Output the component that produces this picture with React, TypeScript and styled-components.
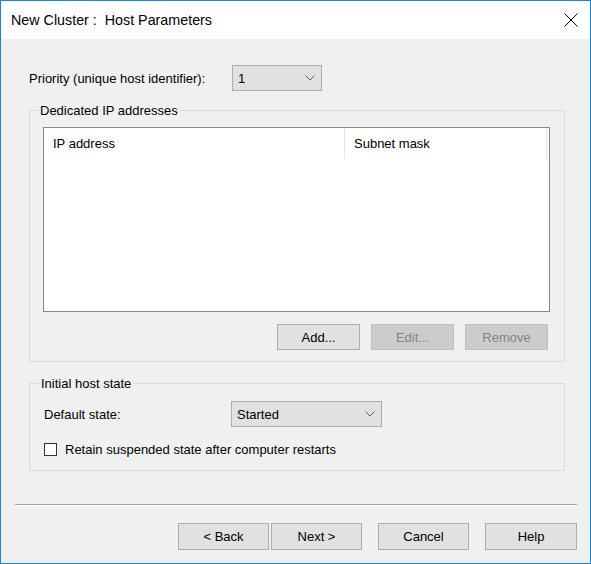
import React from "react";
import styled, { createGlobalStyle } from "styled-components";

const Global = createGlobalStyle`
  html, body { margin: 0; padding: 0; background: #ffffff; }
  * { box-sizing: border-box; }
  body { font-family: "Liberation Sans", Arial, sans-serif; font-size: 13px; color: #000; }
`;

const Window = styled.div`
  width: 591px;
  height: 564px;
  border: 1px solid #1883d7;
  display: flex;
  flex-direction: column;
  background: #f0f0f0;
`;

const TitleBar = styled.div`
  height: 38px;
  flex: none;
  background: #ffffff;
  display: flex;
  align-items: center;
  justify-content: space-between;
  padding: 0 12px 0 10px;
`;

const Title = styled.div`
  font-size: 14.3px;
  white-space: pre;
  color: #000;
`;

const CloseBtn = styled.div`
  width: 14px;
  height: 14px;
  display: flex;
`;

const Body = styled.div`
  flex: 1;
  display: flex;
  flex-direction: column;
  padding: 26px 13px 13px 14px;
`;

const FieldRow = styled.div<{ $labelWidth: number; $indent?: number }>`
  display: flex;
  align-items: center;
  height: 26px;
  padding-left: ${(p) => p.$indent ?? 0}px;
  & > span:first-child {
    width: ${(p) => p.$labelWidth}px;
    flex: none;
  }
`;

const Combo = styled.div<{ $width: number }>`
  width: ${(p) => p.$width}px;
  height: 26px;
  background: #e1e1e1;
  border: 1px solid #adadad;
  display: flex;
  align-items: center;
  justify-content: space-between;
  padding: 0 6px 0 5px;
`;

const GroupBox = styled.fieldset<{ $top: number; $pad: string }>`
  margin: ${(p) => p.$top}px 12px 0 14px;
  border: 1px solid #dcdcdc;
  padding: ${(p) => p.$pad};
  min-width: 0;
`;

const Legend = styled.legend`
  padding: 0 2px;
  margin-left: -5px;
  line-height: 17px;
  font-size: 13px;
`;

const ListView = styled.div`
  height: 185px;
  background: #ffffff;
  border: 1px solid #828790;
`;

const HeaderRow = styled.div`
  display: flex;
  height: 31px;
`;

const HeaderCell = styled.div<{ $width: number }>`
  width: ${(p) => p.$width}px;
  flex: none;
  border-right: 1px solid #e5e5e5;
  display: flex;
  align-items: center;
  padding-left: 9px;
`;

const ButtonRow = styled.div<{ $gap: number; $top: number; $right: number }>`
  display: flex;
  justify-content: flex-end;
  gap: ${(p) => p.$gap}px;
  margin-top: ${(p) => p.$top}px;
  padding-right: ${(p) => p.$right}px;
`;

const Button = styled.button<{ $width: number; $height: number }>`
  width: ${(p) => p.$width}px;
  height: ${(p) => p.$height}px;
  margin: 0;
  padding: 0;
  font-family: inherit;
  font-size: 13px;
  color: #000;
  background: #e1e1e1;
  border: 1px solid #adadad;
  &:disabled {
    color: #838383;
    background: #cccccc;
    border-color: #bfbfbf;
  }
`;

const CheckRow = styled.label`
  display: flex;
  align-items: center;
  height: 18px;
  margin-top: 13px;
  gap: 8px;
`;

const CheckBox = styled.span`
  width: 13px;
  height: 13px;
  border: 1px solid #333333;
  background: #ffffff;
  flex: none;
`;

const Separator = styled.div`
  margin-top: 33px;
  border-top: 1px solid #a0a0a0;
  border-bottom: 1px solid #ffffff;
`;

const Spacer = styled.div<{ $w: number }>`
  width: ${(p) => p.$w}px;
`;

const Chevron = () => (
  <svg width="10" height="6" viewBox="0 0 10 6">
    <polyline points="0.5,0.5 5,5 9.5,0.5" fill="none" stroke="#606060" strokeWidth="1" />
  </svg>
);

export default function App() {
  return (
    <>
      <Global />
      <Window>
        <TitleBar>
          <Title>{"New Cluster :  Host Parameters"}</Title>
          <CloseBtn>
            <svg width="14" height="14" viewBox="0 0 14 14">
              <path d="M0.5 0.5 L13.5 13.5 M13.5 0.5 L0.5 13.5" stroke="#000" strokeWidth="1" />
            </svg>
          </CloseBtn>
        </TitleBar>
        <Body>
          <FieldRow $labelWidth={203} $indent={14}>
            <span>Priority (unique host identifier):</span>
            <Combo $width={90}>
              <span>1</span>
              <Chevron />
            </Combo>
          </FieldRow>

          <GroupBox $top={11} $pad="8px 14px 11px 13px">
            <Legend>Dedicated IP addresses</Legend>
            <ListView>
              <HeaderRow>
                <HeaderCell $width={301}>IP address</HeaderCell>
                <HeaderCell $width={202}>Subnet mask</HeaderCell>
              </HeaderRow>
            </ListView>
            <ButtonRow $gap={11} $top={12} $right={2}>
              <Button $width={83} $height={26}>Add...</Button>
              <Button $width={83} $height={26} disabled>Edit...</Button>
              <Button $width={83} $height={26} disabled>Remove</Button>
            </ButtonRow>
          </GroupBox>

          <GroupBox $top={13} $pad="9px 14px 12px 14px">
            <Legend>Initial host state</Legend>
            <FieldRow $labelWidth={187}>
              <span>Default state:</span>
              <Combo $width={151}>
                <span>Started</span>
                <Chevron />
              </Combo>
            </FieldRow>
            <CheckRow>
              <CheckBox />
              <span>Retain suspended state after computer restarts</span>
            </CheckRow>
          </GroupBox>

          <Separator />

          <ButtonRow $gap={2} $top={17} $right={0}>
            <Button $width={91} $height={27}>{"< Back"}</Button>
            <Button $width={91} $height={27}>{"Next >"}</Button>
            <Spacer $w={12} />
            <Button $width={91} $height={27}>Cancel</Button>
            <Spacer $w={12} />
            <Button $width={92} $height={27}>Help</Button>
          </ButtonRow>
        </Body>
      </Window>
    </>
  );
}
